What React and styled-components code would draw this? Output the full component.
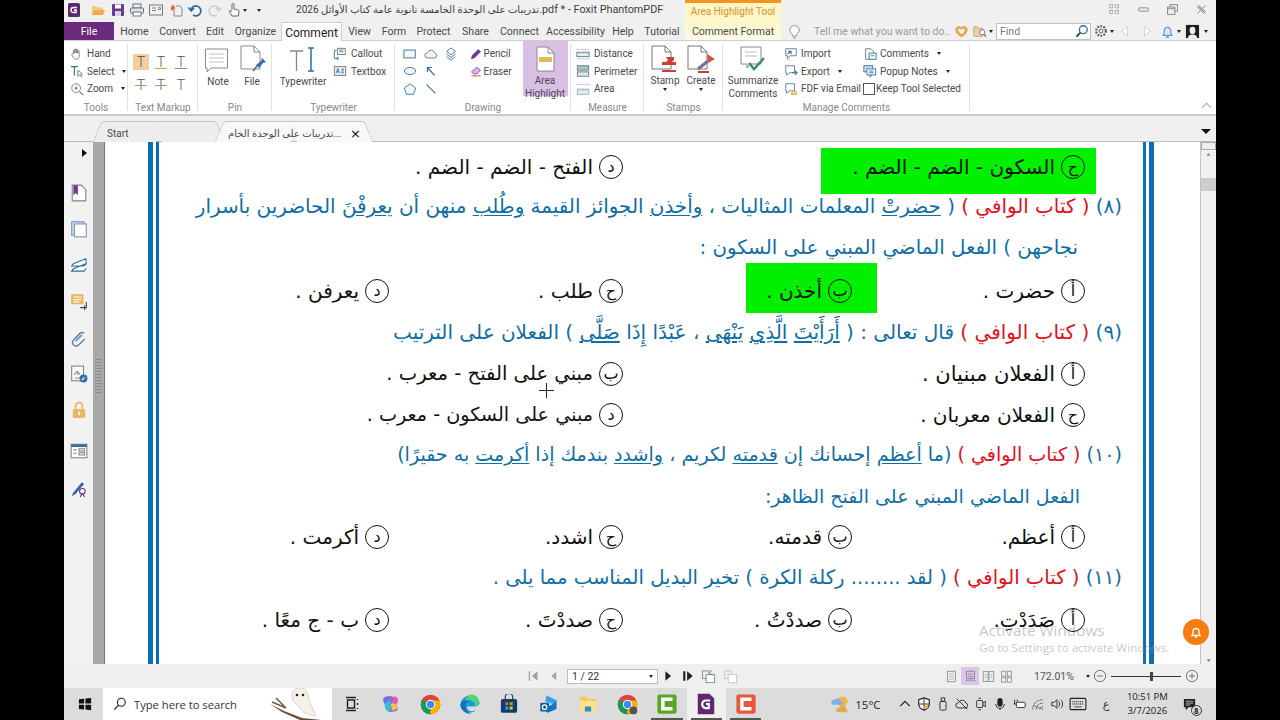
import React from "react";
import styled, { createGlobalStyle } from "styled-components";

const Global = createGlobalStyle`
  html, body { margin: 0; padding: 0; background: #000; overflow: hidden; }
  * { box-sizing: border-box; }
`;
const UI = `Roboto, "Noto Sans", "DejaVu Sans", sans-serif`;
const AR = `"DejaVu Sans", sans-serif`;

const Root = styled.div`
  width: 1280px; height: 720px; background: #000; display: flex; justify-content: center;
`;
const Win = styled.div`
  position: relative; width: 1152px; height: 720px; display: flex; flex-direction: column;
  font: 10.500px ${UI}; color: #444; background: #f0f0f0; overflow: hidden;
`;

/* ---------- icons ---------- */
const Svg = styled.svg`
  flex: none; display: block; fill: none; width: ${p => p.$s || 16}px; height: ${p => p.$s || 16}px;
`;
const I = ({ s = 16, vb, children }) => (
  <Svg $s={s} viewBox={vb || "0 0 16 16"} aria-hidden="true">{children}</Svg>
);
const G = "#5f7488", B = "#2f6f9f", P = "#6a3a8c", O = "#e9b765", R = "#d8503f";
const icons = {
  logo: <><rect x="2" y="1" width="12" height="14" rx="1.5" fill="#5d2a72"/><path d="M11 5.5H7.5a2.5 2.5 0 0 0 0 5H10V8H8" stroke="#fff" strokeWidth="1.5"/></>,
  open: <><path d="M2 4h4l1 1.5h6V13H2z" fill="#f0c884"/><path d="M4 8h11l-2 5H2z" fill="#f5a94a"/></>,
  save: <><rect x="2" y="2" width="12" height="12" rx="1" fill={P}/><rect x="5" y="2.5" width="6" height="4" fill="#fff"/><rect x="5" y="9" width="6" height="5" fill="#d9cfe3"/></>,
  print: <><rect x="4" y="2" width="8" height="4" stroke={G}/><rect x="1.5" y="6" width="13" height="5.5" rx="1" stroke={G} fill="#dfe5ea"/><rect x="4" y="10" width="8" height="4" stroke={G} fill="#fff"/></>,
  mail: <><rect x="1.5" y="3" width="13" height="10" stroke="#777"/><path d="M4 6h4M4 8.5h4M10.5 5.5h2v2h-2z" stroke="#888"/></>,
  star: <><path d="M4 2l1 2 2-1-1 2 2 1-2 .7.7 2-2-1-1.7 1.3.3-2.3L1.6 6 3.6 5.300z" fill="#e2602f"/><path d="M8 4h4l2 2v8H6V8" stroke="#888"/></>,
  undo: <path d="M4 8a5 5 0 1 1 2 5M1.500 5.500 4.200 9 7 6" stroke="#2c6aa5" strokeWidth="1.7"/>,
  redo: <path d="M12 8a5 5 0 1 0-2 5M14.500 5.500 11.800 9 9 6" stroke="#c6ced4" strokeWidth="1.5"/>,
  handq: <path d="M6 8V2.500a1 1 0 0 1 2 0V7l4 1c1 .3 1.300 1 1 2l-.7 4H6L3.500 10c-.7-1 .5-2 1.300-1.300L6 10" stroke="#666" fill="#fff"/>,
  hand: <path d="M4 7V4a.8.8 0 0 1 1.600 0V7 3a.8.8 0 0 1 1.600 0V7 3.500a.8.8 0 0 1 1.600 0V7 5a.8.8 0 0 1 1.600 0v6c0 2-1.500 3-3 3s-2.500-.5-3.500-2L2 9c-.5-1 .7-1.800 1.500-1z" stroke="#777" fill="#fff"/>,
  select: <><path d="M1 3h8M5 3v10" stroke={B} strokeWidth="1.3"/><path d="M9 7v7l2-1.500 1.500 2 1-.7-1.300-2 2-.4z" stroke="#777" fill="#fff"/></>,
  zoom: <><circle cx="7" cy="7" r="5" stroke="#777"/><path d="M5 7h4M7 5v4" stroke={B}/><path d="M11 11l4 4" stroke="#777" strokeWidth="1.500"/></>,
  callout: <><rect x="5" y="1.500" width="9" height="7" stroke={G}/><path d="M7 3.500h5M7 5.500h5" stroke={G}/><path d="M4 4H1.500v9h5M6 11l-2 2 2 2" stroke={B}/></>,
  textbox: <><rect x="1.500" y="3" width="13" height="10" stroke={G} fill="#eef2f5"/><path d="M3.500 10.500 5.500 5l2 5.500M4.300 9h2.500M9.500 6h3M9.500 8h3M9.500 10h3" stroke={B}/></>,
  rect: <rect x="1" y="3.500" width="13" height="9" stroke={B} fill="#f3f6f9"/>,
  cloud: <path d="M4 12.500a3 3 0 0 1 0-6 4.500 4.500 0 0 1 8.500.5 2.800 2.800 0 0 1-.5 5.500z" stroke={G} fill="#f3f6f9"/>,
  stamps: <path d="M8 1 13 5 8 9 3 5zM3 8l5 4 5-4M3 11l5 4 5-4" stroke={B} />,
  ell: <ellipse cx="8" cy="8" rx="6.500" ry="4" stroke={B} fill="#f3f6f9"/>,
  arrow: <path d="M12 13 4 4M4 9V4h5" stroke={B} strokeWidth="1.400"/>,
  pent: <path d="M8 2l6.500 5-2.500 7H4L1.500 7z" stroke={B} fill="#f3f6f9"/>,
  line: <path d="M3 3l10 10" stroke={B} strokeWidth="1.300"/>,
  pencil: <path d="M2 14l1-4 8-8 3 3-8 8zM2 14l3-1" fill={P} stroke={P}/>,
  eraser: <><path d="M5 12 2 9l7-6 5 4-5 5z" fill="#d7b8e0" stroke={P}/><path d="M2 14.500h12" stroke={R} strokeWidth="1.300"/></>,
  dist: <><rect x="1" y="6" width="14" height="5" stroke={G} fill="#e6eef2"/><path d="M1 3h14M4 6v2M8 6v2M12 6v2M1 13.500h14" stroke="#8fb0b5" strokeDasharray="2 1"/></>,
  perim: <><rect x="1.500" y="2" width="13" height="5" fill="#a8c8c8" stroke={G}/><rect x="1.500" y="9" width="13" height="5" fill="#dbe9ea" stroke={G}/></>,
  area: <><path d="M1 3h14M1 8h14" stroke="#8fb0b5" strokeDasharray="2 1"/><rect x="1.500" y="9" width="13" height="5" stroke="#8fb0b5" fill="#e3eeef"/></>,
  imp: <><path d="M2 2h12v8H7l-3 3v-3H2z" stroke={G}/><path d="M4 8l4-3M5 5h3v3" stroke={B} strokeWidth="1.200"/><path d="M3 14h4" stroke={O}/></>,
  exp: <><path d="M2 2h10v8H6l-3 3v-3H2z" stroke={G}/><path d="M9 10h6M12.500 7.500 15 10l-2.500 2.500" stroke={B} strokeWidth="1.200"/></>,
  fdf: <><path d="M2 2h10v8H6l-3 3v-3H2z" stroke={G}/><rect x="8" y="10" width="7" height="5" fill={O}/><path d="M8 10l3.500 3L15 10" stroke="#fff" strokeWidth=".8"/></>,
  comm: <><path d="M3 2h6l3 3v9H3z" stroke={G}/><rect x="7" y="7" width="8" height="7" stroke={B} fill="#fff"/><path d="M9 10h4" stroke={B}/></>,
  pop: <><rect x="1" y="2" width="10" height="7" fill="#c9def1" stroke={B}/><rect x="4.500" y="5.500" width="10" height="7" fill="#fff" stroke={B}/><path d="M7 8h5M7 10h5M8 12.500v2.500l2.500-2.500" stroke={B}/></>,
  bulb: <><path d="M8 1.500a5 5 0 0 0-3 9c.6.500 1 1.500 1 2.500h4c0-1 .4-2 1-2.500a5 5 0 0 0-3-9z" stroke="#8b8b8b" fill="#fff"/><path d="M6.500 15h3" stroke="#8b8b8b"/></>,
  heart: <path d="M8 14C3 11 1.500 8.500 1.500 6 1.500 3.500 3.500 2 5.500 2 6.800 2 7.500 3 8 4c.5-1 1.200-2 2.500-2 2 0 4 1.500 4 4 0 2.500-1.500 5-6.500 8zm0-3c2.500-1.500 3.500-3 3.500-4.500C11.500 5 9 4.500 8 6.500 7 4.500 4.500 5 4.500 6.500 4.500 8 5.500 9.500 8 11z" fill="#e0aa54" fillRule="evenodd"/>,
  folder: <><path d="M1 3h4l1.500 2H11v9H1z" fill="#e8d39a" stroke="#c7a95f"/><circle cx="10.500" cy="9.500" r="3" stroke="#666" fill="#fff"/><path d="M12.500 12l2.500 2.500" stroke="#666" strokeWidth="1.300"/></>,
  search: <><circle cx="9.500" cy="6.500" r="4.500" stroke={B} strokeWidth="1.500" fill="#fff"/><path d="M6 10l-4.500 4.500" stroke="#2b2b2b" strokeWidth="2"/></>,
  gear: <><circle cx="8" cy="8" r="2.200" stroke="#555"/><circle cx="8" cy="8" r="5.500" stroke="#555" strokeWidth="2.400" strokeDasharray="2 1.500"/></>,
  left: <path d="M11 2.500v11L4 8z" stroke="#ccc" fill="#fff"/>,
  right: <path d="M5 2.500v11L12 8z" stroke="#ccc" fill="#fff"/>,
  bell: <><path d="M3 12c1-1 1.500-2 1.500-5a3.500 3.500 0 0 1 7 0c0 3 .5 4 1.500 5z" stroke="#2b78b5" fill="#d8e8f5"/><path d="M6.500 14h3" stroke="#2b78b5" strokeWidth="1.300"/></>,
  avatar: <><rect x="1" y="1" width="14" height="14" fill="#1e1e1e"/><path d="M8 3a3 3 0 0 0-3 3v2c0 1 1 3 3 3s3-2 3-3V6a3 3 0 0 0-3-3zM3 15c0-2 2-3.500 3-3.500h4c1 0 3 1.500 3 3.500z" fill="#efefef"/></>,
  apps: <path d="M2 2h4v4H2zM9 2h4v4H9zM2 9h4v4H2zM9 9h4v4H9z" stroke="#777" strokeDasharray="1.500 .8"/>,
  min: <rect x="2" y="6" width="12" height="4" rx="1" stroke="#777"/>,
  restore: <><rect x="5" y="2" width="9" height="8" stroke="#777"/><rect x="2" y="5" width="9" height="9" stroke="#777" fill="#eee"/><path d="M2 7h9" stroke="#777"/></>,
  close: <path d="M3 3l10 10M13 3 3 13M5 3l8 8M3 5l8 8" stroke="#888" strokeWidth="1.200"/>,
  first: <path d="M2 2.500h1.500v11H2zM12 2.500v11L5.500 8z" fill="#9aa0a6"/>,
  prev: <path d="M11 2.500v11L4.500 8z" fill="#9aa0a6"/>,
  next: <path d="M5 2.500v11L11.500 8z" fill="#222"/>,
  last: <path d="M2.500 2.500h2.500v11H2.500zM7 2.500v11L13.500 8z" fill="#222"/>,
  nav1: <><rect x="1.500" y="2" width="7" height="8" stroke="#7f8c99"/><rect x="5.500" y="6" width="9" height="8.500" stroke="#7f8c99" fill="#fff"/><path d="M12 1 9 4l3 3" stroke="#3c9a6d"/></>,
  nav2: <><rect x="1.500" y="2" width="7" height="8" stroke="#c3c9cf"/><rect x="5.500" y="6" width="9" height="8.500" stroke="#c3c9cf" fill="#fff"/></>,
  v1: <><rect x="3" y="1.500" width="10" height="13" stroke="#888"/><path d="M5 5h6M5 8h6M5 11h6" stroke="#aaa"/></>,
  v2: <><rect x="3" y="1.500" width="10" height="9" stroke="#8a7a9c"/><path d="M5 5h6M5 8h6" stroke="#8a7a9c"/><path d="M3 14.500v-2h10v2" stroke="#8a7a9c"/></>,
  v3: <><rect x="1.500" y="2" width="6" height="12" stroke="#888"/><rect x="8.500" y="2" width="6" height="12" stroke="#888"/><path d="M3 6h3M3 9h3M10 6h3M10 9h3" stroke="#aaa"/></>,
  v4: <><rect x="2" y="1.500" width="5" height="6" stroke="#888"/><rect x="9" y="1.500" width="5" height="6" stroke="#888"/><rect x="2" y="9" width="5" height="6" stroke="#888"/><rect x="9" y="9" width="5" height="6" stroke="#888"/></>,
  minus: <><circle cx="8" cy="8" r="6.500" stroke="#666"/><path d="M4.500 8h7" stroke="#666"/></>,
  plus: <><circle cx="8" cy="8" r="6.500" stroke="#666"/><path d="M4.500 8h7M8 4.500v7" stroke="#666"/></>,
  page: <><path d="M2 1h8l4 4v10H2z" stroke="#788" fill="#fff"/><path d="M3 1h4v9L5 8 3 10z" fill={P}/></>,
  pages: <><rect x="1.500" y="1.500" width="11" height="12" stroke="#7d9ab8" fill="#cddbea"/><rect x="4" y="3.500" width="10.500" height="11.500" stroke="#7d9ab8" fill="#fff"/></>,
  layers: <path d="M14 1.500 3 6l-1.500 2h11L14.500 6zM14 6 3 10.500l-1.500 2h11l2-2.500" stroke={B} fill="#fff"/>,
  cmts: <><rect x="1" y="1" width="11" height="9" fill={O}/><path d="M3 3.500h7M3 6h7M3 8h5" stroke="#fff" strokeWidth=".9"/><path d="M9 13h5.500v-5M13 11v4" stroke="#444"/></>,
  clip: <path d="M12.500 3a2.500 2.500 0 0 0-3.600 0L3 9a3.200 3.200 0 0 0 4.500 4.500l5.500-5.500M5 10l5.500-5.500" stroke="#5b86b0" strokeWidth="1.300"/>,
  sign: <><rect x="1.500" y="1" width="10.500" height="13" stroke="#888" fill="#fff"/><path d="M4 9c1-4 4-4 3-2s1 1 2 0M4 11.500h5" stroke="#888"/><circle cx="12" cy="12" r="3.500" fill="#2c72ad"/><path d="M10.500 13.500 13 11" stroke="#fff"/></>,
  lock: <><path d="M5 7V4.500a3 3 0 0 1 6 0V7" stroke={O} strokeWidth="1.500"/><rect x="2.500" y="7" width="11" height="8" rx="1" fill={O}/><rect x="7.300" y="9.500" width="1.500" height="3" fill="#fff"/></>,
  form: <><rect x="1" y="2" width="14" height="12" stroke="#888" fill="#fff"/><rect x="1" y="2" width="14" height="2.500" fill="#3e6d96"/><path d="M3 7h3M3 10h3" stroke="#888"/><rect x="8" y="6" width="5" height="2" stroke="#888"/><rect x="8" y="9.500" width="5" height="2" stroke="#888"/></>,
  pen: <><path d="M1.500 14.500 3 11l7.500-9 2 1.500L5 12.500z" fill="#2c6aa5"/><circle cx="11" cy="10" r="2.500" stroke={P}/><path d="M9 15l2-3 2 3" stroke={P}/></>,
  win: <path d="M1 2.500 7 2v5.500H1zM8.500 1.800 15 1v6.500H8.500zM1 8.800h6v5.500l-6-.6zM8.500 8.800H15V15l-6.500-.7z" fill="#111"/>,
  srch: <><circle cx="9.500" cy="6" r="4.500" stroke="#222" strokeWidth="1.200"/><path d="M6.200 9.300 1.500 14.500" stroke="#222" strokeWidth="1.400"/></>,
  task: <path d="M2 1.500h10M2 14.500h10M3.500 4h7v8h-7zM13.500 3v1M13.500 7v2M13.500 12v1" stroke="#222" strokeWidth="1.400"/>,
  copilot: <><path d="M5 2c3-1 5 0 6 3l2 5c1 3-1 4-3 4-3 1-5 0-6-3L2 6c-1-3 1-4 3-4z" fill="#7b6be0"/><path d="M10 2c2 0 4 1 3.500 4L11 12c-1 2-3 2-4 0z" fill="#e15ea7"/><path d="M3 8 7 4l2 8-3 2c-2 0-3-3-3-6z" fill="#34b9d6"/><path d="M8 8c2-1 5 0 5 2s-2 3-4 3z" fill="#f5c148"/></>,
  chrome: <><circle cx="8" cy="8" r="7.500" fill="#db4437"/><path d="M8 8 1.500 4.500A7.500 7.500 0 0 0 8 15.500z" fill="#0f9d58"/><path d="M8 8v7.500A7.500 7.500 0 0 0 14.800 5H8z" fill="#f4b400"/><circle cx="8" cy="8" r="3.600" fill="#fff"/><circle cx="8" cy="8" r="2.800" fill="#4285f4"/></>,
  chromep: <><circle cx="8" cy="8" r="7.500" fill="#db4437"/><path d="M8 8 1.500 4.500A7.500 7.500 0 0 0 8 15.500z" fill="#0f9d58"/><path d="M8 8v7.500A7.500 7.500 0 0 0 14.800 5H8z" fill="#f4b400"/><circle cx="8" cy="8" r="3.600" fill="#fff"/><circle cx="8" cy="8" r="2.800" fill="#4285f4"/><circle cx="12.500" cy="12.500" r="3" fill="#555"/></>,
  edge: <><path d="M1 8a7.500 7.500 0 0 1 14.500-2c.5 2-1 3.500-3 3.500H6c0 2.500 2.500 4 5 3.500l2-.5A7.500 7.500 0 0 1 1 8z" fill="#1a9bd8"/><path d="M1 8c1-3 5-4 8-2.500-3 0-4.500 2-4 5 .5 2.500 2.500 4 4.500 4.500A7.500 7.500 0 0 1 1 8z" fill="#1470b8"/><path d="M5 5a5 5 0 0 1 10 1c0 2-1 3.500-3 3.500 1-3-3-6-7-4.500z" fill="#4fd27e"/></>,
  store: <><path d="M5 4V2.500a3 3 0 0 1 6 0V4" stroke="#1f4b7d"/><rect x="1.500" y="4" width="13" height="11" rx="1.500" fill="#0f3d70"/><rect x="5" y="6.500" width="2.500" height="2.500" fill="#f25022"/><rect x="8.500" y="6.500" width="2.500" height="2.500" fill="#7fba00"/><rect x="5" y="10" width="2.500" height="2.500" fill="#00a4ef"/><rect x="8.500" y="10" width="2.500" height="2.500" fill="#ffb900"/></>,
  outlook: <><path d="M6 1l8 4-3 3-6-2z" fill="#36a3e8"/><path d="M14 5v7l-7 3-3-3 7-4z" fill="#1272c4"/><rect x="1" y="7" width="7" height="7" rx="1" fill="#0e5fa8"/><circle cx="4.500" cy="10.500" r="1.800" stroke="#fff"/></>,
  files: <><path d="M1.500 2h5l1.500 2h6.500v10h-13z" fill="#f2cd55"/><path d="M1.500 5.500h13V14h-13z" fill="#fbe190"/><path d="M5.500 14v-4h5v4" fill="#3a86c8"/></>,
  green: <><rect x="1" y="1" width="14" height="14" rx="1.500" fill="#59a824"/><path d="M12 4.500H5v7h7" stroke="#fff" strokeWidth="2.500"/></>,
  red: <><rect x="1" y="1" width="14" height="14" rx="1.500" fill="#e8563c"/><path d="M12 4.500H5v7h7" stroke="#fff" strokeWidth="2.500"/></>,
  foxit: <><path d="M2 0.500h8.500L14 4v11.500H2z" fill="#5d2a72"/><path d="M11 5.500H7.500a2.800 2.800 0 0 0 0 5.500H10V8H8" stroke="#fff" strokeWidth="1.500"/></>,
  weather: <><circle cx="10" cy="6" r="4" fill="#f3b63f"/><path d="M1 7a2.500 2.500 0 0 1 3-2.500 3 3 0 0 1 5 1.500c2 0 2 2.500 0 2.500H2.500A1.500 1.500 0 0 1 1 7z" fill="#7fb2e0"/><path d="M5 13a2 2 0 0 1 2.500-2 2.500 2.500 0 0 1 5 .5c2 .2 2 3 0 3H6.500A1.500 1.500 0 0 1 5 13z" fill="#e4a94d"/></>,
  chev: <path d="M2.500 10.500 8 5l5.500 5.500" stroke="#222" strokeWidth="1.400"/>,
  shield: <><path d="M8 1l6 2v5c0 3.500-3 6-6 7-3-1-6-3.500-6-7V3z" stroke="#222" fill="#fff" strokeWidth="1.300"/><path d="M8 1v14M2 8h12" stroke="#222"/><rect x="8.500" y="9" width="4" height="4" fill="#e9b23a"/></>,
  usb: <><path d="M6 1h4v4H6z" stroke="#222"/><rect x="4.500" y="5" width="7" height="10" rx="1.500" stroke="#222"/></>,
  cloudoff: <><path d="M4 12.500a3 3 0 0 1 0-6 4.500 4.500 0 0 1 8.500.5 2.800 2.800 0 0 1-.5 5.500z" stroke="#222"/><path d="M2 2l12 12" stroke="#222"/></>,
  cam: <><rect x="3" y="4" width="7" height="8" rx="1" stroke="#222"/><path d="M10 7l3-2v6l-3-2M5 1.500h3M5 14.500h3" stroke="#222"/></>,
  mic: <><rect x="5" y="1" width="6" height="10" rx="3" fill="#222"/><path d="M3 8a5 5 0 0 0 10 0M8 13v2" stroke="#222"/></>,
  batt: <><path d="M6 3v5M3 3v5M2 8h5" stroke="#222"/><rect x="5" y="6" width="10" height="6" rx="1" stroke="#222" fill="#fff"/></>,
  wifi: <path d="M2 14c0-6 5-11 12-11M6 14c0-4 3-7 8-7M10 14c0-2 2-3 4-3M3 10l11 4" stroke="#333" strokeDasharray="1.200 .8"/>,
  vol: <><path d="M2 6h3l3-3v10l-3-3H2z" stroke="#222"/><path d="M10 5c1.500 2 1.500 4 0 6M12.500 3c2.500 3 2.500 7 0 10" stroke="#222"/></>,
  kbd: <><rect x="1" y="3" width="14" height="10" rx="1" stroke="#222"/><path d="M3 6h10M3 8h10M5 10.500h6" stroke="#222" strokeDasharray="1 .7"/></>,
  notif: <><path d="M2 2h12v9H7l-3 3v-3H2z" fill="#222"/><path d="M4 4.500h8M4 6.500h8M4 8.500h5" stroke="#ddd" strokeWidth=".8"/></>,
};
const Ic = ({ n, s }) => <I s={s}>{icons[n]}</I>;
const Caret = styled.i`
  display: inline-block; flex: none; width: 0; height: 0; margin-left: ${p => p.$ml ?? 5}px;
  border: 2.500px solid transparent; border-top: 3px solid #222; border-bottom: 0;
`;
const Sp = styled.span`display: inline-block; flex: none; width: ${p => p.$w}px;`;

/* ---------- title bar ---------- */
const TitleBar = styled.header`display: flex; align-items: center; height: 22px; flex: none;`;
const Qat = styled.div`
  display: flex; align-items: center; gap: 3.400px; width: 223px; padding: 0 0 2px 2px; flex: none;
`;
const Title = styled.div`
  font: 10.800px ${UI}; color: #3d3d3d; white-space: nowrap; width: 398px; padding: 0 0 3px 9px; flex: none; overflow: hidden;
`;
const TitleAr = styled.span`font-size: 10.050px;`;
const ContextHead = styled.div`
  flex: none; width: 96px; height: 22px; border-top: 3px solid #f29422; background: #fdf6c8;
  color: #e08f2a; font-size: 10px; text-align: center; line-height: 17px; white-space: nowrap;
`;
const WinBtns = styled.div`
  margin-left: auto; display: flex; align-items: center; gap: 16px; padding: 0 8.500px 4px 0;
`;

/* ---------- tab row ---------- */
const TabRow = styled.nav`
  display: flex; height: 19px; flex: none; border-bottom: 1px solid #cfcfcf; align-items: stretch;
`;
const FileTab = styled.div`
  width: 50px; background: #6c2a7e; color: #fff; text-align: center; line-height: 20px; flex: none;
`;
const Tab = styled.div`
  width: ${p => p.$w}px; flex: none; text-align: center; line-height: 20px; white-space: nowrap; color: #4a4a4a;
  ${p => p.$on && `
    background: #fff; color: #222; font-size: 12px; height: 20px; border: 1px solid #cfcfcf; border-bottom: 0;
    line-height: 20px;
  `}
  ${p => p.$ctx && `background: linear-gradient(#fdf6c8, #fdfbea);`}
`;
const TabExtras = styled.div`
  flex: 1; display: flex; align-items: center; padding-left: 6px; min-width: 0;
`;
const TellMe = styled.span`color: #9a9a9a; margin: 0 6px 0 12px; width: 134px; white-space: nowrap; flex: none;`;
const Find = styled.div`
  width: 95px; height: 17px; border: 1px solid #b9c4cc; background: #fff; display: flex; align-items: center;
  justify-content: space-between; padding: 0 1px 0 3px; color: #777; margin: 0 3px; flex: none;
`;

/* ---------- ribbon ---------- */
const Ribbon = styled.section`
  position: relative; height: 75px; flex: none; background: #fff; display: flex; border-bottom: 2px solid #c9c9c9; font-size: 10px;
`;
const Group = styled.div`
  width: ${p => p.$w}px; flex: none; display: flex; flex-direction: column; position: relative;
  &::after { content: ""; position: absolute; right: 0; top: 3px; bottom: 3px; width: 1px; background: #e1e1e1; }
`;
const Body = styled.div`
  flex: 1; display: flex; padding: ${p => p.$p || "4px 0 0 6px"}; min-height: 0;
`;
const GroupLabel = styled.div`
  height: 12px; text-align: center; color: #888; font-size: 10px; line-height: 11px; flex: none;
`;
const Stack = styled.div`
  display: flex; flex-direction: column; width: ${p => p.$w ? p.$w + "px" : "auto"}; flex: none;
  margin-left: ${p => p.$ml || 0}px; padding-top: ${p => p.$pt || 0}px;
`;
const Small = styled.div`
  display: flex; align-items: center; gap: ${p => p.$gap ?? 3}px; height: 17.500px; white-space: nowrap; color: #4a4a4a;
`;
const Big = styled.div`
  display: flex; flex-direction: column; align-items: center; width: ${p => p.$w}px; flex: none;
  margin-left: ${p => p.$ml || 0}px; padding-top: ${p => p.$pt ?? 3}px; height: ${p => p.$h ? p.$h + "px" : "auto"};
  text-align: center; line-height: 12.500px; color: #4a4a4a; white-space: nowrap;
  ${p => p.$on && `background: #d9bfe4;`}
`;
const BigLabel = styled.div`margin-top: ${p => p.$mt ?? 3}px;`;
const Grid3 = styled.div`
  display: grid; grid-template-columns: repeat(3, 20px); grid-auto-rows: 23px; align-items: center; justify-items: center;
  padding: 9px 0 0 3px;
`;
const MarkBox = styled.div`
  width: 16px; height: 16px; display: flex; align-items: center; justify-content: center;
  background: ${p => p.$on ? "#f3cfa0" : "transparent"}; font: 300 14px Roboto, sans-serif; color: #555;
  position: relative; line-height: 1;
  &::after { content: ""; position: absolute; left: 2px; right: 2px; bottom: ${p => p.$mid ? 7 : 1}px; height: 1px; background: ${p => p.$c || "transparent"}; }
`;
const ShapeGrid = styled.div`
  display: grid; grid-template-columns: repeat(3, 20.500px); grid-auto-rows: 17.500px; align-items: center; justify-items: center; padding: 4px 0 0 3px;
`;
const Check = styled.span`width: 12px; height: 12px; border: 1px solid #555; flex: none; background: #fff;`;
const Collapse = styled.span`position: absolute; right: 6px; bottom: 3px; width: 7px; height: 7px; border: solid #aaa; border-width: 1.500px 0 0 1.500px; transform: rotate(45deg);`;

/* ---------- doc tabs ---------- */
const DocTabs = styled.div`
  height: 26px; flex: none; background: #efefef; display: flex; align-items: flex-end; padding-left: 33px; position: relative;
  border-bottom: 1px solid #bdbdbd;
`;
const DocTab = styled.div`
  position: relative; height: 20px; width: ${p => p.$w}px; margin-left: ${p => p.$ml || 0}px; flex: none;
  padding: 4px 0 0 ${p => p.$pl || 0}px; color: #4a4a4a; display: flex; align-items: center; white-space: nowrap; z-index: 1;
  font-size: 10px;
  &::before, &::after {
    content: ""; position: absolute; top: 0; bottom: -1px; width: 50%; z-index: -1; background: ${p => p.$on ? "#f8f8f8" : "#eeeeee"}; border-top: 1px solid #c4c4c4;
  }
  &::before { left: 0; border-left: 1px solid #c4c4c4; border-radius: 4px 0 0 0; transform: skewX(-22deg); }
  &::after { right: 0; border-right: 1px solid #c4c4c4; border-radius: 0 4px 0 0; transform: skewX(22deg); }
`;
const DocClose = styled.span`margin-left: auto; margin-right: 8px; font-size: 13px; color: #111; font-family: "DejaVu Sans", sans-serif;`;
const TabMenu = styled.i`
  position: absolute; right: 5px; top: 13px; width: 0; height: 0; border: 5px solid transparent; border-top: 5px solid #111; border-bottom: 0;
`;

/* ---------- document view ---------- */
const Viewer = styled.main`flex: 1; display: flex; min-height: 0; position: relative;`;
const SideBar = styled.aside`
  width: 29px; flex: none; background: #f2f2f2; display: flex; flex-direction: column; align-items: center; padding-top: 7px;
`;
const SideTri = styled.i`
  align-self: flex-end; margin: 0 6px 0 0; width: 0; height: 0; border: 4px solid transparent; border-left: 5px solid #111; border-right: 0;
`;
const SideIcon = styled.div`margin-top: ${p => p.$mt}px;`;
const Split = styled.div`
  width: 12px; flex: none; background: #a9a9a9; border-right: 1px solid #777; position: relative;
  &::after { content: ""; position: absolute; left: 2px; right: 2px; top: 215px; height: 36px; background: repeating-linear-gradient(0deg, #8c8c8c 0 1px, transparent 1px 3px); }
`;
const PageArea = styled.div`flex: 1; background: #fff; min-width: 0; position: relative; padding-left: 43px; overflow: hidden;`;
const Sheet = styled.article`
  width: 1006px; height: 100%; border: solid #0b6fb8; border-width: 0 5px; padding: 0 3px;
`;
const Inner = styled.div`
  height: 100%; border: solid #0b6fb8; border-width: 0 3px; direction: rtl; padding-top: 13px;
`;
const Line = styled.div`
  height: 24px; margin-top: ${p => p.$gap}px; padding-right: ${p => p.$pr ?? 21}px; font: ${p => p.$fs}px/24px ${AR};
  color: #0f6ea3; white-space: nowrap;
`;
const Red = styled.span`color: #e3101c;`;
const U = styled.span`text-decoration: underline; text-underline-offset: 2px;`;
const Opts = styled.div`
  height: 24px; margin-top: ${p => p.$gap}px; padding-right: 58px; display: grid; grid-template-columns: 233px 229px 234px 1fr;
`;
const Opt = styled.div`
  position: relative; display: flex; align-items: center; gap: 6px; font: ${p => p.$fs || 20}px/24px ${AR}; color: #111; white-space: nowrap;
  grid-column: ${p => p.$col};
`;
const Mark = styled.span`
  width: 24px; height: 24px; flex: none; border: 1.800px solid #111; border-radius: 50%; display: flex; align-items: center; justify-content: center;
  font-size: 16px; line-height: 1; position: relative; z-index: 1;
`;
const OptText = styled.span`position: relative; z-index: 1;`;
const Hl = styled.span`
  position: absolute; background: #00f000; right: ${p => p.$r}px; top: ${p => p.$t}px; width: ${p => p.$w}px; height: ${p => p.$h}px;
`;
const Scroll = styled.aside`
  width: 16px; flex: none; background: #f0f0f0; border-left: 1px solid #c4c4c4; display: flex; flex-direction: column; align-items: center; position: relative;
`;
const ScrollTop = styled.div`width: 100%; height: 8px; border: 1px solid #aaa; background: #eee;`;
const ScrollUp = styled.div`font-size: 8px; color: #333; margin-top: 2px; line-height: 10px;`;
const ScrollThumb = styled.div`width: 100%; height: 13px; background: #cdcdcd; margin-top: 16px;`;
const ScrollDown = styled.div`margin-top: auto; margin-bottom: 1px; font-size: 8px; color: #333; line-height: 10px; transform: rotate(180deg);`;
const Activate = styled.div`
  position: absolute; left: 915px; top: 478px; color: rgba(150, 150, 150, 0.55); pointer-events: none; white-space: nowrap; font: 15.300px "Open Sans", sans-serif;
`;
const ActSub = styled.div`font-size: 11.600px; margin-top: 0;`;
const Orange = styled.div`
  position: absolute; left: 1119px; top: 477px; width: 26px; height: 26px; border-radius: 50%; background: #f57c0e;
  display: flex; align-items: center; justify-content: center;
`;
const Cross = styled.div`
  position: absolute; left: 475px; top: 241px; width: 15px; height: 15px;
  &::before { content: ""; position: absolute; left: 7px; top: 0; width: 1px; height: 15px; background: #222; }
  &::after { content: ""; position: absolute; left: 0; top: 7px; height: 1px; width: 15px; background: #222; }
`;

/* ---------- status bar ---------- */
const Status = styled.footer`
  height: 24px; flex: none; background: #efefef; display: flex; align-items: center; padding-left: 463px;
`;
const PageBox = styled.div`
  width: 91px; height: 15px; background: #fff; border: 1px solid #bbb; display: flex; align-items: center; justify-content: space-between;
  padding: 0 4px; color: #333; flex: none;
`;
const Zoomed = styled.span`color: #555; width: 40px; flex: none;`;
const ViewBtn = styled.span`
  width: 18px; height: 18px; display: flex; align-items: center; justify-content: center; background: ${p => p.$on ? "#d9c7e6" : "transparent"}; flex: none;
`;
const Slider = styled.div`
  width: 70px; height: 1px; background: #333; margin: 0 4px; position: relative; flex: none;
  &::after { content: ""; position: absolute; left: 39px; top: -4px; width: 3px; height: 9px; background: #444; }
`;

/* ---------- taskbar ---------- */
const Taskbar = styled.footer`
  height: 32px; flex: none; background: #dcdcdc; display: flex; align-items: center; position: relative;
`;
const Start = styled.div`width: 39px; flex: none; display: flex; justify-content: center; padding-left: 2px;`;
const SearchBox = styled.div`
  width: 229px; height: 32px; background: #fff; display: flex; align-items: center; padding-left: 10px; gap: 7px;
  font: 11.200px "Open Sans", sans-serif; color: #333; flex: none; overflow: hidden; position: relative;
`;
const Owl = styled.svg`position: absolute; right: 0; bottom: 0; width: 62px; height: 32px;`;
const TaskIcons = styled.div`display: flex; align-items: center;`;
const TaskItem = styled.div`
  width: 39.400px; height: 32px; flex: none; display: flex; align-items: center; justify-content: center; position: relative;
  ${p => p.$on && `background: #f0f0f0;`}
  ${p => p.$mark && `&::after { content: ""; position: absolute; left: 4px; right: 4px; bottom: 0; height: 2px; background: #555; }`}
`;
const Weather = styled.div`
  margin-left: 65px; display: flex; align-items: center; gap: 5px; font: 11.500px "Open Sans", sans-serif; color: #222; width: 64px; flex: none;
`;
const Tray = styled.div`display: flex; align-items: center; gap: 5px; margin-left: 3.500px; flex: none;`;
const Ain = styled.span`font: 11px ${AR}; color: #333; margin: 0 17px 0 16px; flex: none;`;
const Clock = styled.div`font: 9.500px/14.500px "Open Sans", sans-serif; color: #222; text-align: center; width: 42px; flex: none; white-space: nowrap;`;
const Notif = styled.div`position: relative; margin-left: 13.500px; flex: none;`;
const NotifN = styled.span`
  position: absolute; right: -5px; bottom: -4px; width: 11px; height: 11px; border: 1px solid #333; border-radius: 50%; background: #ddd;
  font: bold 8px/9px "Open Sans", sans-serif; text-align: center; color: #222;
`;

const tabs = [["Home",41],["Convert",45],["Edit",30],["Organize",51],["Comment",61,"on"],["View",35],["Form",34],["Protect",45],["Share",39],["Connect",49],["Accessibility",63],["Help",32],["Tutorial",46],["Comment Format",96,"ctx"]];
const side = [["page",27],["pages",18],["layers",19],["cmts",18],["clip",19],["sign",17],["lock",18],["form",23],["pen",20]];

const Option = ({ m, col, t, hl, fs }) => (
  <Opt $col={col} $fs={fs}>
    {hl && <Hl $r={hl[0]} $t={hl[1]} $w={hl[2]} $h={hl[3]} />}
    <Mark>{m}</Mark>
    <OptText>{t}</OptText>
  </Opt>
);

export default function App() {
  return (
    <Root>
      <Global />
      <Win>
        <TitleBar>
          <Qat>
            <Ic n="logo" />
            <Sp $w={1.500} />
            {["open","save","print","mail","star","undo","redo","handq"].map(n => <Ic key={n} n={n} />)}
            <Caret $ml={-2} />
            <Caret $ml={6} />
          </Qat>
          <Title><TitleAr>تدريبات على الوحدة الخامسة ثانوية عامة كتاب الأوائل 2026</TitleAr>.pdf * - Foxit PhantomPDF</Title>
          <ContextHead>Area Highlight Tool</ContextHead>
          <WinBtns>
            <Ic n="apps" s={13} />
            <Ic n="min" s={13} />
            <Ic n="restore" s={13} />
            <Ic n="close" s={13} />
          </WinBtns>
        </TitleBar>
        <TabRow>
          <FileTab>File</FileTab>
          {tabs.map(([t, w, k]) => <Tab key={t} $w={w} $on={k === "on"} $ctx={k === "ctx"}>{t}</Tab>)}
          <TabExtras>
            <Ic n="bulb" s={15} />
            <TellMe>Tell me what you want to do..</TellMe>
            <Ic n="heart" s={15} />
            <Sp $w={4} />
            <Ic n="folder" s={14} />
            <Caret $ml={2} />
            <Find>Find<Ic n="search" s={14} /></Find>
            <Ic n="gear" s={14} />
            <Caret $ml={2} />
            <Sp $w={4} />
            <Ic n="left" s={14} />
            <Sp $w={8} />
            <Ic n="right" s={14} />
            <Sp $w={5.500} />
            <Ic n="bell" s={15} />
            <Caret $ml={2} />
            <Sp $w={4} />
            <Ic n="avatar" s={15} />
            <Caret $ml={4.500} />
          </TabExtras>
        </TabRow>

        <Ribbon>
          <Group $w={64}>
            <Body>
              <Stack>
                <Small><Ic n="hand" s={14} />Hand</Small>
                <Small><Ic n="select" s={14} />Select<Caret /></Small>
                <Small><Ic n="zoom" s={14} />Zoom<Caret /></Small>
              </Stack>
            </Body>
            <GroupLabel>Tools</GroupLabel>
          </Group>
          <Group $w={70}>
            <Body $p="0">
              <Grid3>
                <MarkBox $on>T</MarkBox>
                <MarkBox $c="#c9a64b">T</MarkBox>
                <MarkBox $c="#888">T</MarkBox>
                <MarkBox $c="#b59a60" $mid>T</MarkBox>
                <MarkBox $c="#b59a60" $mid>T</MarkBox>
                <MarkBox>T</MarkBox>
              </Grid3>
            </Body>
            <GroupLabel>Text Markup</GroupLabel>
          </Group>
          <Group $w={74}>
            <Body $p="0 0 0 3px">
              <Big $w={34}>
                <I s={32} vb="0 0 32 32"><path d="M3.500 5h22v19H9l-4 4v-4H3.500z" stroke="#8a8a8a" fill="#fff"/><path d="M7 10h15M7 14h15M7 18h15" stroke="#c4c4c4"/></I>
                <BigLabel $mt={0}>Note</BigLabel>
              </Big>
              <Big $w={34}>
                <I s={32} vb="0 0 32 32"><path d="M5 2h13l6 6v17H5z" stroke="#8a8a8a" fill="#fff"/><path d="M18 2v6h6" stroke="#8a8a8a"/><path d="M26 14l4 4-3 1-4 5-3-3 5-4z" fill="#3a6ea5"/><path d="M21 22l-4 5" stroke="#3a6ea5" strokeWidth="1.500"/></I>
                <BigLabel $mt={0}>File</BigLabel>
              </Big>
            </Body>
            <GroupLabel>Pin</GroupLabel>
          </Group>
          <Group $w={123}>
            <Body $p="0 0 0 5px">
              <Big $w={52}>
                <I s={32} vb="0 0 32 32"><path d="M3 7h13M9.500 7v20" stroke="#888" strokeWidth="1.300"/><path d="M21 4h6M24 4v23M21 27h6" stroke="#2b6ea5" strokeWidth="1.500"/></I>
                <BigLabel $mt={0}>Typewriter</BigLabel>
              </Big>
              <Stack $ml={4} $pt={4}>
                <Small $gap={4}><Ic n="callout" s={14} />Callout</Small>
                <Small $gap={4}><Ic n="textbox" s={14} />Textbox</Small>
              </Stack>
            </Body>
            <GroupLabel>Typewriter</GroupLabel>
          </Group>
          <Group $w={176}>
            <Body $p="0 0 0 2px">
              <ShapeGrid>
                {["rect","cloud","stamps","ell","arrow",null,"pent","line",null].map((n, i) => n ? <Ic key={i} n={n} s={14} /> : <span key={i} />)}
              </ShapeGrid>
              <Stack $ml={8} $w={51} $pt={4}>
                <Small $gap={2}><Ic n="pencil" s={12} />Pencil</Small>
                <Small $gap={2}><Ic n="eraser" s={12} />Eraser</Small>
              </Stack>
              <Big $w={45} $ml={2} $on $h={55} $pt={5}>
                <I s={26} vb="0 0 26 26"><path d="M5 1h11l6 6v18H5z" stroke="#888" fill="#fff"/><path d="M16 1v6h6" stroke="#888"/><rect x="7" y="11" width="13" height="5" fill="#e6b652"/></I>
                <BigLabel $mt={3}>Area<br />Highlight</BigLabel>
              </Big>
            </Body>
            <GroupLabel>Drawing</GroupLabel>
          </Group>
          <Group $w={73}>
            <Body $p="4px 0 0 5px">
              <Stack>
                <Small $gap={4}><Ic n="dist" s={14} />Distance</Small>
                <Small $gap={4}><Ic n="perim" s={14} />Perimeter</Small>
                <Small $gap={4}><Ic n="area" s={14} />Area</Small>
              </Stack>
            </Body>
            <GroupLabel>Measure</GroupLabel>
          </Group>
          <Group $w={79}>
            <Body $p="0 0 0 3px">
              <Big $w={36}>
                <I s={32} vb="0 0 32 32"><path d="M3 2h13l6 6v17H3z" stroke="#777" fill="#fff"/><path d="M16 2v6h6" stroke="#777"/><path d="M15 14h8v3l-2 2h4v3H11v-3h4l2-2z" fill="#c7413a" transform="translate(2 -1)"/><rect x="13" y="26" width="14" height="2" fill="#c7413a"/></I>
                <BigLabel $mt={-1}>Stamp</BigLabel>
                <Caret $ml={0} />
              </Big>
              <Big $w={36}>
                <I s={32} vb="0 0 32 32"><path d="M3 2h13l6 6v17H3z" stroke="#777" fill="#fff"/><path d="M16 2v6h6" stroke="#777"/><path d="M22 10l8 5-7 4z" fill="#d85040"/><path d="M13 25l10-8" stroke="#7a6f8a" strokeWidth="3"/><rect x="13" y="27" width="11" height="2" fill="#c7413a"/></I>
                <BigLabel $mt={-1}>Create</BigLabel>
                <Caret $ml={0} />
              </Big>
            </Body>
            <GroupLabel>Stamps</GroupLabel>
          </Group>
          <Group $w={247}>
            <Body $p="0">
              <Big $w={60}>
                <I s={30} vb="0 0 30 30"><path d="M3 3h20v17H12l-3 4v-4H3z" stroke="#888" fill="#fff"/><path d="M7 8h12M7 12h12" stroke="#bbb"/><path d="M11 19l5 6 10-11" stroke="#3f8f74" strokeWidth="2.600"/></I>
                <BigLabel $mt={1}>Summarize<br />Comments</BigLabel>
              </Big>
              <Stack $ml={1} $w={79} $pt={4}>
                <Small $gap={3}><Ic n="imp" s={14} />Import</Small>
                <Small $gap={3}><Ic n="exp" s={14} />Export<Caret /></Small>
                <Small $gap={3}><Ic n="fdf" s={14} />FDF via Email</Small>
              </Stack>
              <Stack $pt={4}>
                <Small $gap={3}><Ic n="comm" s={14} />Comments<Caret /></Small>
                <Small $gap={3}><Ic n="pop" s={14} />Popup Notes<Caret /></Small>
                <Small $gap={1}><Check />Keep Tool Selected</Small>
              </Stack>
            </Body>
            <GroupLabel>Manage Comments</GroupLabel>
          </Group>
          <Collapse />
        </Ribbon>

        <DocTabs>
          <DocTab $w={124} $pl={10}>Start</DocTab>
          <DocTab $w={150} $ml={-2} $pl={9} $on>تدريبات على الوحدة الخام...<DocClose>×</DocClose></DocTab>
          <TabMenu />
        </DocTabs>

        <Viewer>
          <SideBar>
            <SideTri />
            {side.map(([n, mt]) => <SideIcon key={n} $mt={mt}><Ic n={n} s={18} /></SideIcon>)}
          </SideBar>
          <Split />
          <PageArea>
            <Sheet>
              <Inner>
                <Opts $gap={0}>
                  <Option col={1} m="ح" t="السكون - الضم - الضم ." hl={[-11, -7, 275, 46]} />
                  <Option col={3} m="د" t="الفتح - الضم - الضم ." />
                </Opts>
                <Line $gap={16} $fs={19.900}>(٨) <Red>( كتاب الوافي )</Red> ( <U>حضرتْ</U> المعلمات المثاليات ، <U>وأخذن</U> الجوائز القيمة <U>وطُلب</U> منهن أن <U>يعرفْنَ</U> الحاضرين بأسرار</Line>
                <Line $gap={17} $pr={65} $fs={19.800}>نجاحهن ) الفعل الماضي المبني على السكون :</Line>
                <Opts $gap={19}>
                  <Option col={1} m="أ" t="حضرت ." />
                  <Option col={2} m="ب" t="أخذن ." hl={[-25, -16, 131, 50]} />
                  <Option col={3} m="ح" t="طلب ." />
                  <Option col={4} m="د" t="يعرفن ." />
                </Opts>
                <Line $gap={17} $fs={20}>(٩) <Red>( كتاب الوافي )</Red> قال تعالى : ( <U>أَرَأَيْتَ</U> <U>الَّذِي</U> <U>يَنْهَى</U> ، عَبْدًا إِذَا <U>صَلَّى</U> ) الفعلان على الترتيب</Line>
                <Opts $gap={18}>
                  <Option col={1} m="أ" t="الفعلان مبنيان ." fs={21} />
                  <Option col={3} m="ب" t="مبني على الفتح - معرب ." fs={19.600} />
                </Opts>
                <Opts $gap={17}>
                  <Option col={1} m="ح" t="الفعلان معربان ." />
                  <Option col={3} m="د" t="مبني على السكون - معرب ." fs={19.200} />
                </Opts>
                <Line $gap={16} $fs={19.100}>(١٠) <Red>( كتاب الوافي )</Red> (ما <U>أعظم</U> إحسانك إن <U>قدمته</U> لكريم ، <U>واشدد</U> بندمك إذا <U>أكرمت</U> به حقيرًا)</Line>
                <Line $gap={17} $pr={63} $fs={19}>الفعل الماضي المبني على الفتح الظاهر:</Line>
                <Opts $gap={17}>
                  <Option col={1} m="أ" t="أعظم." />
                  <Option col={2} m="ب" t="قدمته." />
                  <Option col={3} m="ح" t="اشدد." />
                  <Option col={4} m="د" t="أكرمت ." />
                </Opts>
                <Line $gap={17} $fs={19.600}>(١١) <Red>( كتاب الوافي )</Red> ( لقد ........ ركلة الكرة ) تخير البديل المناسب مما يلى .</Line>
                <Opts $gap={18}>
                  <Option col={1} m="أ" t="صَدَدْتِ." />
                  <Option col={2} m="ب" t="صددْتُ ." />
                  <Option col={3} m="ح" t="صددْتَ ." />
                  <Option col={4} m="د" t="ب - ج معًا ." />
                </Opts>
              </Inner>
            </Sheet>
          </PageArea>
          <Scroll>
            <ScrollTop />
            <ScrollUp>^</ScrollUp>
            <ScrollThumb />
            <ScrollDown>^</ScrollDown>
          </Scroll>
          <Activate>Activate Windows<ActSub>Go to Settings to activate Windows.</ActSub></Activate>
          <Orange><I s={16}><path d="M4 11.500c.8-1 1-2 1-4a3 3 0 0 1 6 0c0 2 .2 3 1 4zM7 13h2" stroke="#fff" strokeWidth="1.300"/></I></Orange>
          <Cross />
        </Viewer>

        <Status>
          <Ic n="first" s={14} />
          <Sp $w={7} />
          <Ic n="prev" s={12} />
          <Sp $w={7} />
          <PageBox>1 / 22<Caret $ml={0} /></PageBox>
          <Sp $w={3} />
          <Ic n="next" s={14} />
          <Sp $w={6} />
          <Ic n="last" s={14} />
          <Sp $w={5.500} />
          <Ic n="nav1" s={15} />
          <Sp $w={7} />
          <Ic n="nav2" s={15} />
          <Sp $w={204.500} />
          <ViewBtn><Ic n="v1" s={13} /></ViewBtn>
          <Sp $w={1} />
          <ViewBtn $on><Ic n="v2" s={13} /></ViewBtn>
          <ViewBtn><Ic n="v3" s={13} /></ViewBtn>
          <ViewBtn><Ic n="v4" s={13} /></ViewBtn>
          <Sp $w={19} />
          <Zoomed>172.01%</Zoomed>
          <Caret $ml={12} />
          <Sp $w={3} />
          <Ic n="minus" s={14} />
          <Slider />
          <Ic n="plus" s={14} />
        </Status>

        <Taskbar>
          <Start><Ic n="win" s={14} /></Start>
          <SearchBox>
            <Ic n="srch" s={14} />Type here to search
            <Owl viewBox="0 0 62 32" aria-hidden="true">
              <path d="M0 16l14 7 18 7 20 2H30L12 24z" fill="#6b4a32"/><path d="M6 10l10 10M2 14l14 6" stroke="#7a5a42" strokeWidth="1.500"/>
              <path d="M22 8c0-6 4-8 8-8 5 0 7 3 8 8 1 7 6 14 8 20-6-1-12-2-16-8-3-4-8-6-8-12z" fill="#f4f1e8" stroke="#d9d4c4"/>
              <circle cx="27" cy="7" r="1.300" fill="#222"/><circle cx="33" cy="7" r="1.300" fill="#222"/>
            </Owl>
          </SearchBox>
          <TaskIcons>
            {[["task",16],["copilot",20],["chrome",21],["edge",21],["store",20],["outlook",20],["files",20],["chromep",21],["green",22,"m"],["foxit",22,"a"],["red",22,"m"]].map(([n, s, f]) => (
              <TaskItem key={n} $on={f === "a"} $mark={!!f}><Ic n={n} s={s} /></TaskItem>
            ))}
          </TaskIcons>
          <Weather><Ic n="weather" s={20} />15°C</Weather>
          <Tray>
            {["chev","shield","usb","cloudoff","cam","mic","batt","wifi","vol"].map(n => <Ic key={n} n={n} s={14} />)}
            <Ic n="kbd" s={18} />
          </Tray>
          <Ain>ع</Ain>
          <Clock>10:51 PM<br />3/7/2026</Clock>
          <Notif><Ic n="notif" s={15} /><NotifN>8</NotifN></Notif>
        </Taskbar>
      </Win>
    </Root>
  );
}
